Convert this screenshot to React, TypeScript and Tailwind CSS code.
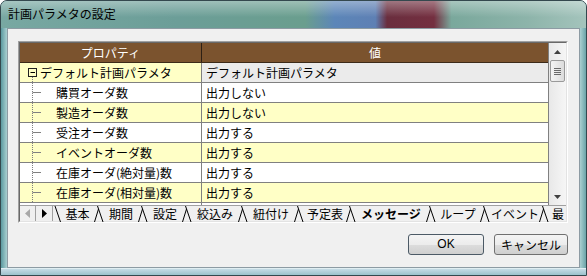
const rows = [
  { name: "購買オーダ数", value: "出力しない" },
  { name: "製造オーダ数", value: "出力しない" },
  { name: "受注オーダ数", value: "出力する" },
  { name: "イベントオーダ数", value: "出力する" },
  { name: "在庫オーダ(絶対量)数", value: "出力する" },
  { name: "在庫オーダ(相対量)数", value: "出力する" },
];

const tabs = [
  { label: "基本", w: "w-[31px]" },
  { label: "期間", w: "w-[32px]" },
  { label: "設定", w: "w-[32px]" },
  { label: "絞込み", w: "w-[44px]" },
  { label: "紐付け", w: "w-[44px]" },
  { label: "予定表", w: "w-[40px]" },
  { label: "メッセージ", w: "w-[68px]", active: true },
  { label: "ループ", w: "w-[42px]" },
  { label: "イベント", w: "w-[47px]" },
  { label: "最", w: "w-[16px]" },
];

function TabSep() {
  return (
    <svg width="12" height="16" className="shrink-0" viewBox="0 0 12 16">
      <path d="M1.5 16 L5.5 3" stroke="#000" strokeWidth="1" fill="none" />
      <path d="M4.5 0 L10 16" stroke="#000" strokeWidth="1" fill="none" />
    </svg>
  );
}

function TreeBranch() {
  return (
    <svg width="24" height="19" className="shrink-0" viewBox="0 0 24 19">
      <path d="M0.5 0 V19" stroke="#808080" strokeDasharray="1 1" />
      <path d="M0.5 9.5 H9" stroke="#808080" />
    </svg>
  );
}

export default function App() {
  return (
    <div className="w-[587px] h-[276px] overflow-hidden flex flex-col rounded-t-[7px] border border-[#34484e] bg-[#8ab8ba] font-['Noto_Sans_CJK_JP',sans-serif] text-[12px] text-black">
      {/* title bar */}
      <div className="h-[27px] shrink-0 pl-[7px] pt-[5px] leading-[16px] bg-[linear-gradient(to_bottom,rgba(255,255,255,0.35),rgba(255,255,255,0)_60%),linear-gradient(to_right,#78a8a2,#6c9e98_30%,#6a9e8e_52%,#5c86b8_57%,#5e80b4_64%,#6a2e3e_66%,#742f40_74%,#7aa89c_77%,#8db4aa_90%,#a4c4bc)]">
        計画パラメタの設定
      </div>

      <div className="flex-1 flex min-h-0">
        <div className="w-[6px] bg-[linear-gradient(to_right,#5c9aa0,#a9cfd0)]" />

        {/* client area */}
        <div className="flex-1 flex flex-col border border-[#8d9ba3] bg-[#f0f0f0] pl-[10px] pt-[12px]">
          <div className="w-[550px] h-[182px] border border-t-[#a0a0a0] border-l-[#a0a0a0] border-b-white border-r-white">
            <div className="h-full flex flex-col border border-t-[#696969] border-l-[#696969] border-b-[#e3e3e3] border-r-[#e3e3e3] bg-white">
              <div className="h-[162px] flex">
                {/* grid */}
                <div className="w-[529px] flex flex-col border-r border-[#808080]">
                  <div className="h-[20px] flex bg-[#7b532e] text-white leading-[19px] border-b border-[#3c2a18]">
                    <div className="w-[182px] text-center border-r border-[#2e2014]">プロパティ</div>
                    <div className="flex-1 text-center">値</div>
                  </div>

                  <div className="h-[20px] flex border-b border-[#808080] leading-[19px]">
                    <div className="w-[182px] flex items-center pl-[8px] bg-[#ffffc6] border-r border-[#808080]">
                      <svg width="11" height="19" className="shrink-0" viewBox="0 0 11 19">
                        <rect x="0.5" y="5.5" width="8" height="8" fill="none" stroke="#202020" />
                        <path d="M2.5 9.5 H7" stroke="#000" />
                        <path d="M4.5 14 V19" stroke="#808080" strokeDasharray="1 1" />
                      </svg>
                      <span className="ml-[1px] whitespace-nowrap">デフォルト計画パラメタ</span>
                    </div>
                    <div className="flex-1 pl-[4px] bg-[#ebebeb]">デフォルト計画パラメタ</div>
                  </div>

                  {rows.map((r, i) => (
                    <div
                      key={r.name}
                      className={`h-[20px] flex border-b border-[#808080] leading-[19px] ${
                        i % 2 === 0 ? "bg-white" : "bg-[#ffffc6]"
                      }`}
                    >
                      <div className="w-[182px] flex items-center pl-[12px] border-r border-[#808080]">
                        <TreeBranch />
                        <span className="whitespace-nowrap">{r.name}</span>
                      </div>
                      <div className="flex-1 pl-[4px]">{r.value}</div>
                    </div>
                  ))}

                  <div className="flex-1 flex bg-white">
                    <div className="w-[182px] border-r border-[#808080]" />
                  </div>
                </div>

                {/* scrollbar */}
                <div className="w-[17px] flex flex-col bg-[linear-gradient(to_right,#e8e8e8,#f6f6f6)]">
                  <div className="h-[17px] flex items-center justify-center">
                    <svg width="7" height="4" viewBox="0 0 7 4">
                      <path d="M0 4 L3.5 0 L7 4 Z" fill="#404040" />
                    </svg>
                  </div>
                  <div className="mx-[1px] h-[22px] rounded-[2px] border border-[#9a9a9a] bg-[linear-gradient(to_right,#f4f4f4,#dcdcdc)] flex flex-col items-center justify-center gap-[1px]">
                    <div className="w-[7px] h-[1px] bg-[#6a6a6a]" />
                    <div className="w-[7px] h-[1px] bg-[#6a6a6a]" />
                    <div className="w-[7px] h-[1px] bg-[#6a6a6a]" />
                    <div className="w-[7px] h-[1px] bg-[#6a6a6a]" />
                  </div>
                  <div className="flex-1" />
                  <div className="h-[17px] flex items-center justify-center">
                    <svg width="7" height="4" viewBox="0 0 7 4">
                      <path d="M0 0 L3.5 4 L7 0 Z" fill="#404040" />
                    </svg>
                  </div>
                </div>
              </div>

              {/* sheet tabs */}
              <div className="h-[16px] flex bg-[#f0f0f0] leading-[16px] border-t border-[#a0a0a0]">
                <div className="w-[16px] shrink-0 flex items-center justify-center border-r border-[#a0a0a0]">
                  <svg width="5" height="9" viewBox="0 0 5 9">
                    <path d="M5 0 L0 4.5 L5 9 Z" fill="#a8a8a8" />
                  </svg>
                </div>
                <div className="w-[17px] shrink-0 flex items-center justify-center border-r border-[#a0a0a0]">
                  <svg width="5" height="9" viewBox="0 0 5 9">
                    <path d="M0 0 L5 4.5 L0 9 Z" fill="#000" />
                  </svg>
                </div>
                <svg width="9" height="16" className="shrink-0" viewBox="0 0 9 16">
                  <path d="M2 0 L7.5 16" stroke="#000" fill="none" />
                </svg>
                {tabs.map((t, i) => (
                  <div key={t.label} className="flex shrink-0">
                    <div className={`${t.w} shrink-0 text-center whitespace-nowrap ${t.active ? "font-bold" : ""}`}>
                      {t.label}
                    </div>
                    {i < tabs.length - 1 && <TabSep />}
                  </div>
                ))}
              </div>
            </div>
          </div>

          {/* buttons */}
          <div className="w-[550px] mt-[11px] flex justify-end gap-[10px]">
            <button className="w-[76px] h-[21px] rounded-[3px] border border-[#4c5a66] bg-[linear-gradient(to_bottom,#f4f4f4,#ececec_50%,#dddddd_50%,#cfcfcf)] font-['Liberation_Sans',sans-serif] text-[12px] leading-[19px]">
              OK
            </button>
            <button className="w-[74px] h-[21px] rounded-[3px] border border-[#707070] bg-[linear-gradient(to_bottom,#f4f4f4,#ececec_50%,#dddddd_50%,#cfcfcf)] text-[12px] leading-[19px]">
              キャンセル
            </button>
          </div>
        </div>

        <div className="w-[6px] bg-[linear-gradient(to_right,#a9cfd0,#6aa4a8)]" />
      </div>

      <div className="h-[7px] shrink-0 bg-[linear-gradient(to_bottom,#c6dce6,#9cc2cc)] border-t border-[#e0eef2]" />
    </div>
  );
}
